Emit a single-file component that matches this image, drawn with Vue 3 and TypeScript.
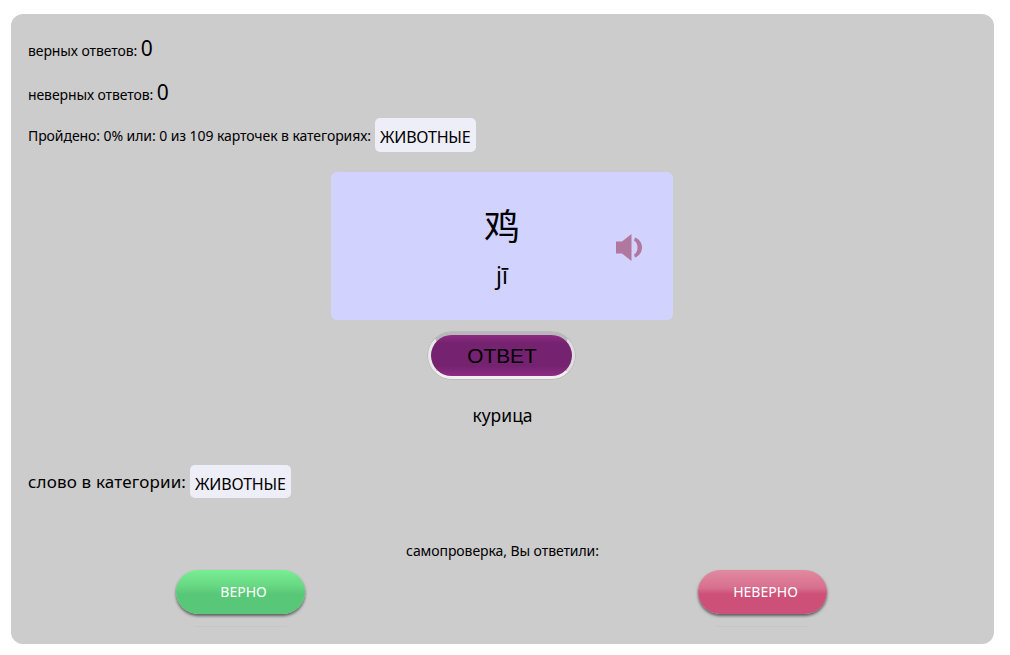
<script setup lang="ts">
const category = 'ЖИВОТНЫЕ'
const stats = [
  { label: 'верных ответов:', value: 0 },
  { label: 'неверных ответов:', value: 0 },
]
</script>

<template>
  <main class="panel">
    <div class="stats">
      <p v-for="s in stats" :key="s.label" class="stat">
        {{ s.label }} <span class="stat-value">{{ s.value }}</span>
      </p>
    </div>
    <p class="progress">
      Пройдено: 0% или: 0 из 109 карточек в категориях:
      <span class="tag">{{ category }}</span>
    </p>

    <section class="card">
      <div class="hanzi">鸡</div>
      <div class="pinyin">jī</div>
      <svg class="sound" viewBox="0 0 26 27" width="26" height="27" aria-hidden="true">
        <path d="M0 7.500h6L15.500 0v27L6 19.500H0z" fill="#b0789e" />
        <path d="M19 3.500c4.500 1.500 7 5.500 7 10s-2.500 8.500-7 10l-1-3c2.500-1.500 3.500-4 3.500-7s-1-5.500-3.500-7z" fill="#b0789e" />
      </svg>
    </section>

    <div class="answer-wrap">
      <button class="answer" type="button">ОТВЕТ</button>
    </div>
    <p class="translation">курица</p>

    <p class="category">
      слово в категории:
      <span class="tag tag-small">{{ category }}</span>
    </p>

    <p class="check">самопроверка, Вы ответили:</p>
    <div class="actions">
      <button class="pill ok" type="button">ВЕРНО</button>
      <button class="pill bad" type="button">НЕВЕРНО</button>
    </div>
  </main>
</template>

<style>
html, body { margin: 0; background: #fff; }
</style>

<style scoped>
.panel {
  box-sizing: border-box;
  width: 983px;
  height: 630px;
  margin: 14px 0 0 11px;
  padding: 19px 17px 0;
  background: #cccccc;
  border-radius: 12px;
  color: #000;
  font-family: "Noto Sans", "Open Sans", "Noto Sans CJK SC", sans-serif;
  font-size: 14px;
}
p { margin: 0; }
.stats {
  display: flex;
  flex-direction: column;
  gap: 14px;
  margin-bottom: 11px;
}
.stat {
  height: 30px;
  line-height: 30px;
  letter-spacing: -0.1px;
}
.stat-value { font-size: 21px; letter-spacing: 0; }
.progress {
  display: flex;
  align-items: center;
  gap: 4px;
  height: 34px;
  letter-spacing: -0.08px;
}
.tag {
  display: inline-block;
  padding: 0 6px 0 5px;
  height: 34px;
  line-height: 39px;
  font-size: 16px;
  letter-spacing: -0.2px;
  background: #eeeef8;
  border-radius: 5px;
}
.tag-small { height: 33px; line-height: 38px; padding: 0 5px; }
.card {
  position: relative;
  box-sizing: border-box;
  width: 342px;
  height: 148px;
  margin: 20px 0 0 303px;
  padding-top: 25px;
  background: #d2d2ff;
  border-radius: 6px;
  text-align: center;
}
.hanzi {
  font-family: "Noto Sans CJK SC", sans-serif;
  font-size: 36px;
  line-height: 54px;
}
.pinyin {
  font-size: 23px;
  line-height: 32px;
  margin-top: 8px;
}
.sound { position: absolute; left: 285px; top: 62px; }
.answer-wrap { display: flex; justify-content: center; margin-top: 12px; padding-right: 2px; }
.answer {
  box-sizing: border-box;
  width: 147px;
  height: 47px;
  border: 3px solid #b8b8b8;
  border-bottom-color: #f0f0f0;
  border-right-color: #dedede;
  border-left-color: #e8e8e8;
  border-radius: 24px;
  padding: 0 0 0 1px;
  background: linear-gradient(#8e2c84 0%, #752270 20%, #752270 75%, #8e2c84 100%);
  box-shadow: 0 0 0 0.5px #aaa;
  color: #000;
  font-family: "Liberation Sans", sans-serif;
  font-size: 20.8px;
}
.translation {
  margin-top: 24px;
  text-align: center;
  font-size: 17.5px;
  line-height: 24px;
}
.category {
  display: flex;
  align-items: center;
  gap: 4px;
  height: 34px;
  margin-top: 37px;
  font-size: 17px;
  letter-spacing: 0.17px;
}
.check {
  margin-top: 43px;
  text-align: center;
  line-height: 20px;
  letter-spacing: -0.08px;
}
.actions {
  display: flex;
  justify-content: space-between;
  margin-top: 9px;
  padding: 0 150px 0 148px;
}
.pill {
  position: relative;
  width: 129px;
  height: 44px;
  border: 0;
  border-radius: 22px;
  padding: 0 0 2px 6px;
  color: #fff;
  font-family: "Noto Sans", sans-serif;
  font-size: 14px;
  letter-spacing: 0;
  box-shadow: 0 2px 3px rgba(0, 0, 0, 0.55);
}
.pill::after {
  content: "";
  position: absolute;
  left: 18px;
  right: 18px;
  bottom: -13px;
  height: 1px;
  background: #c6c6c6;
}
.ok { background: linear-gradient(#78ee92 0%, #68d884 35%, #58c878 55%, #58c878 100%); }
.bad { background: linear-gradient(#e08aa0 0%, #d87090 40%, #cc5078 55%, #cc5078 100%); }
</style>
